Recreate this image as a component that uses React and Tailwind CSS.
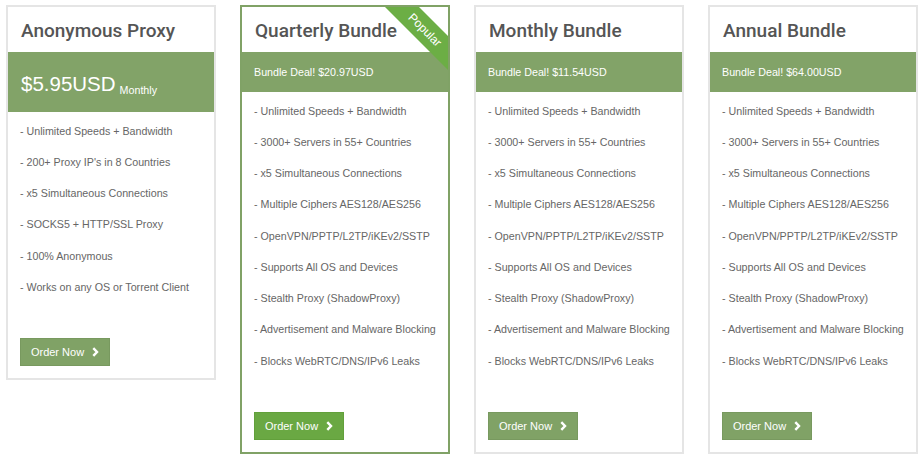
import React from 'react';

const bundleFeatures = [
  '- Unlimited Speeds + Bandwidth',
  '- 3000+ Servers in 55+ Countries',
  '- x5 Simultaneous Connections',
  '- Multiple Ciphers AES128/AES256',
  '- OpenVPN/PPTP/L2TP/iKEv2/SSTP',
  '- Supports All OS and Devices',
  '- Stealth Proxy (ShadowProxy)',
  '- Advertisement and Malware Blocking',
  '- Blocks WebRTC/DNS/IPv6 Leaks',
];

const proxyFeatures = [
  '- Unlimited Speeds + Bandwidth',
  "- 200+ Proxy IP's in 8 Countries",
  '- x5 Simultaneous Connections',
  '- SOCKS5 + HTTP/SSL Proxy',
  '- 100% Anonymous',
  '- Works on any OS or Torrent Client',
];

const bundles = [
  { title: 'Quarterly Bundle', price: '$20.97USD', popular: true },
  { title: 'Monthly Bundle', price: '$11.54USD' },
  { title: 'Annual Bundle', price: '$64.00USD' },
];

const Chevron = () => (
  <svg width="7" height="10" viewBox="0 0 7 10" className="ml-[8px]">
    <path d="M1.3 1.2 L5 5 L1.3 8.8" fill="none" stroke="white" strokeWidth="2.4" strokeLinejoin="miter" />
  </svg>
);

const OrderButton = ({ popular }) => (
  <button
    className={`flex items-center justify-center w-[90px] h-[28px] text-[11px] text-white border ${
      popular ? 'bg-[#6aa843] border-[#62a03b]' : 'bg-[#80a266] border-[#78995f]'
    }`}
  >
    Order Now
    <Chevron />
  </button>
);

const FeatureList = ({ items }) => (
  <ul className="pt-[3.5px] px-[12px] text-[10.7px] text-[#666]">
    {items.map((f) => (
      <li key={f} className="py-2 leading-[15.25px] whitespace-nowrap">
        {f}
      </li>
    ))}
  </ul>
);

const Card = ({ title, popular, band, items }) => (
  <div
    className={`relative w-[210px] border-2 bg-white overflow-hidden flex flex-col ${
      popular ? 'border-[#80a266]' : 'border-[#e5e5e5]'
    }`}
  >
    {popular && (
      <div className="absolute left-[128px] top-[11px] w-[110px] h-[24px] rotate-45 bg-[#6cae45] flex items-center justify-center text-white text-[12px]">
        Popular
      </div>
    )}
    <div className="h-[45px] flex items-center px-[13px] pt-[3px] font-['Roboto'] font-medium text-[19px] text-[#555]">
      {title}
    </div>
    {band}
    <FeatureList items={items} />
    <div className="px-[12px] pt-[35px] pb-[12px]">
      <OrderButton popular={popular} />
    </div>
  </div>
);

export default function App() {
  return (
    <div className="w-[923px] h-[460px] bg-white font-['Liberation_Sans',Arial,sans-serif] flex items-start gap-[24px] pt-[5px] pl-[6px]">
      <Card
        title="Anonymous Proxy"
        items={proxyFeatures}
        band={
          <div className="h-[60px] bg-[#82a368] flex items-center px-[13px] pt-[4px] text-white">
            <span className="text-[20.5px]">$5.95USD</span>
            <span className="text-[10.7px] ml-[4px] self-end mb-[14px]">Monthly</span>
          </div>
        }
      />
      {bundles.map((b) => (
        <Card
          key={b.title}
          title={b.title}
          popular={b.popular}
          items={bundleFeatures}
          band={
            <div className="h-[40px] bg-[#82a368] flex items-center px-[12px] text-white text-[10.7px]">
              Bundle Deal! {b.price}
            </div>
          }
        />
      ))}
    </div>
  );
}
